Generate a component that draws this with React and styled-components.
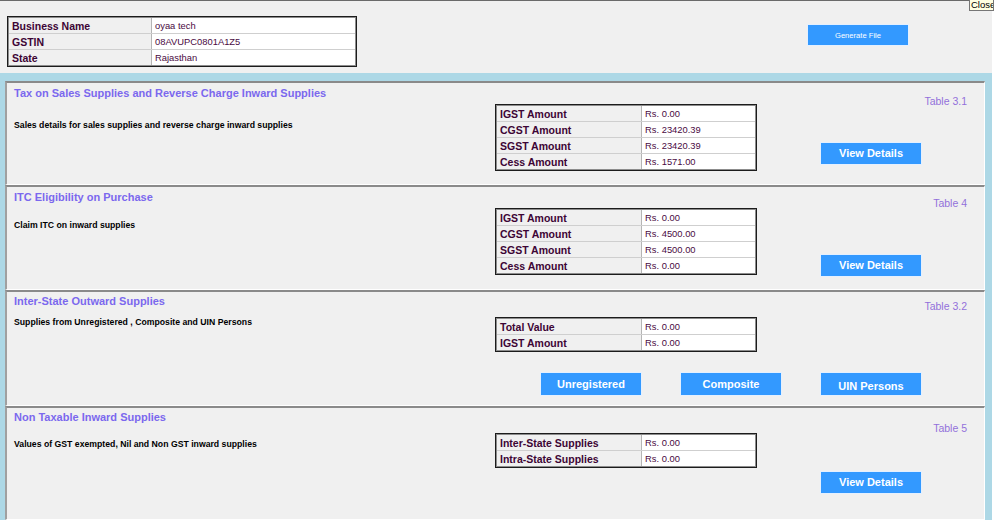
import React from 'react'
import styled, { createGlobalStyle } from 'styled-components'

const GlobalStyle = createGlobalStyle`
  html, body {
    margin: 0;
    padding: 0;
    background: #ffffff;
    font-family: "Liberation Sans", Arial, sans-serif;
  }
  * { box-sizing: border-box; }
`

const Frame = styled.div`
  position: relative;
  width: 992px;
  height: 520px;
  display: flex;
  flex-direction: column;
  background: #f0f0f0;
  border-top: 1px solid #6a6a6a;
  overflow: hidden;
`

const Header = styled.div`
  height: 72px;
  display: flex;
  align-items: flex-start;
  flex-shrink: 0;
`

const InfoBox = styled.div`
  margin: 15px 0 0 7px;
`

const Body = styled.div`
  flex: 1;
  display: flex;
  flex-direction: column;
  background: #add8e6;
  padding: 8px 7px 0 5px;
  min-height: 0;
`

const Section = styled.section`
  height: ${p => (p.$height ? p.$height + 'px' : 'auto')};
  flex: ${p => (p.$height ? '0 0 auto' : '1')};
  display: grid;
  grid-template-columns: 488px 262px 1fr;
  align-content: start;
  align-items: start;
  background: #f0f0f0;
  border-top: 2px solid #8a8a8a;
  border-left: 2px solid #a0a0a0;
  border-right: 1px solid #ffffff;
  border-bottom: 1px solid #ffffff;
`

const Info = styled.div`
  padding: ${p => p.$top}px 0 0 7px;
`

const Title = styled.div`
  font-size: 11px;
  line-height: 13px;
  font-weight: bold;
  color: #7b68ee;
`

const Desc = styled.div`
  margin-top: ${p => p.$gap}px;
  font-size: 8.7px;
  line-height: 12px;
  font-weight: bold;
  color: #000000;
`

const TableWrap = styled.div`
  margin-top: ${p => p.$top || 0}px;
  width: ${p => p.$width}px;
  border: 1px solid #1c1c1c;
  box-shadow: inset 0 0 0 1px #8c8c8c;
  padding: 1px;
  background: #ffffff;
`

const Row = styled.div`
  display: grid;
  grid-template-columns: ${p => p.$label}px 1fr;
  height: 16px;
  border-bottom: 1px solid #cfcfcf;
  &:last-child {
    border-bottom: none;
    height: 15px;
  }
`

const LabelCell = styled.div`
  background: #f0f0f0;
  border-right: 1px solid #b5b5b5;
  padding: 1px 0 0 3px;
  font-size: 10.5px;
  line-height: 14px;
  font-weight: bold;
  color: #3d0535;
`

const ValueCell = styled.div`
  padding: 1px 0 0 3px;
  font-size: 9.4px;
  line-height: 14px;
  color: #4a0a42;
`

const Side = styled.div`
  display: flex;
  flex-direction: column;
  align-items: flex-start;
  padding-right: 17px;
`

const TableNo = styled.div`
  align-self: flex-end;
  margin-top: ${p => p.$top}px;
  font-size: 10.5px;
  line-height: 13px;
  color: #9370db;
`

const Button = styled.button`
  width: 102px;
  height: ${p => p.$h || 23}px;
  margin: ${p => p.$mt || 0}px 0 0 ${p => p.$ml || 0}px;
  padding: ${p => p.$pt || 0}px 0 0 0;
  background: #3399ff;
  border: 1px solid #e4f0ff;
  color: #ffffff;
  font-family: "Liberation Sans", Arial, sans-serif;
  font-size: ${p => p.$fs || 11}px;
  font-weight: ${p => (p.$plain ? 'normal' : 'bold')};
  line-height: 13px;
  cursor: pointer;
  flex-shrink: 0;
`

const ButtonRow = styled.div`
  grid-column: 1 / -1;
  display: flex;
  justify-content: flex-end;
  gap: 38px;
  margin-top: ${p => p.$top}px;
  padding-right: 62px;
`

const Tooltip = styled.div`
  position: absolute;
  top: 0;
  left: 969px;
  width: 25px;
  height: 11px;
  background: #ffffe1;
  border: 1px solid #767676;
  border-top: none;
  font-size: 9.5px;
  line-height: 10px;
  color: #000000;
  padding-left: 1px;
  overflow: hidden;
  white-space: nowrap;
`

const Outer = styled.div`
  position: relative;
  width: 1000px;
  height: 520px;
`

const business = [
  ['Business Name', 'oyaa tech'],
  ['GSTIN', '08AVUPC0801A1Z5'],
  ['State', 'Rajasthan'],
]

const sections = [
  {
    title: 'Tax on Sales Supplies and Reverse Charge Inward Supplies',
    desc: 'Sales details for sales supplies and reverse charge inward supplies',
    tableNo: 'Table 3.1',
    height: 104,
    titleTop: 4, descGap: 19, tableTop: 21, labelTop: 12, buttonGap: 34,
    rows: [
      ['IGST Amount', 'Rs. 0.00'],
      ['CGST Amount', 'Rs. 23420.39'],
      ['SGST Amount', 'Rs. 23420.39'],
      ['Cess Amount', 'Rs. 1571.00'],
    ],
  },
  {
    title: 'ITC Eligibility on Purchase',
    desc: 'Claim ITC on inward supplies',
    tableNo: 'Table 4',
    height: 105,
    titleTop: 4, descGap: 15, tableTop: 21, labelTop: 10, buttonGap: 44,
    rows: [
      ['IGST Amount', 'Rs. 0.00'],
      ['CGST Amount', 'Rs. 4500.00'],
      ['SGST Amount', 'Rs. 4500.00'],
      ['Cess Amount', 'Rs. 0.00'],
    ],
  },
  {
    title: 'Inter-State Outward Supplies',
    desc: 'Supplies from Unregistered , Composite and UIN Persons',
    tableNo: 'Table 3.2',
    height: 116,
    titleTop: 3, descGap: 8, tableTop: 25, labelTop: 8, rowTop: 20,
    buttons: ['Unregistered', 'Composite', 'UIN Persons'],
    rows: [
      ['Total Value', 'Rs. 0.00'],
      ['IGST Amount', 'Rs. 0.00'],
    ],
  },
  {
    title: 'Non Taxable Inward Supplies',
    desc: 'Values of GST exempted, Nil and Non GST inward supplies',
    tableNo: 'Table 5',
    titleTop: 3, descGap: 14, tableTop: 25, labelTop: 14, buttonGap: 36,
    rows: [
      ['Inter-State Supplies', 'Rs. 0.00'],
      ['Intra-State Supplies', 'Rs. 0.00'],
    ],
  },
]

const DataTable = ({ rows, width, label, top }) => (
  <TableWrap $width={width} $top={top}>
    {rows.map(([k, v]) => (
      <Row key={k} $label={label}>
        <LabelCell>{k}</LabelCell>
        <ValueCell>{v}</ValueCell>
      </Row>
    ))}
  </TableWrap>
)

const SummarySection = ({ s }) => (
  <Section $height={s.height}>
    <Info $top={s.titleTop}>
      <Title>{s.title}</Title>
      <Desc $gap={s.descGap}>{s.desc}</Desc>
    </Info>
    <DataTable rows={s.rows} width={262} label={145} top={s.tableTop} />
    <Side>
      <TableNo $top={s.labelTop}>{s.tableNo}</TableNo>
      {!s.buttons && <Button $ml={63} $mt={s.buttonGap}>View Details</Button>}
    </Side>
    {s.buttons && (
      <ButtonRow $top={s.rowTop}>
        {s.buttons.map((b, i) => (
          <Button key={b} $pt={i === 2 ? 4 : 0} $h={24}>{b}</Button>
        ))}
      </ButtonRow>
    )}
  </Section>
)

export default function App() {
  return (
    <Outer>
      <GlobalStyle />
      <Frame>
        <Header>
          <InfoBox>
            <DataTable rows={business} width={350} label={143} />
          </InfoBox>
          <Button $plain $fs={7.6} $h={22} $mt={23} $ml={450}>Generate File</Button>
        </Header>
        <Body>
          {sections.map(s => (
            <SummarySection key={s.tableNo} s={s} />
          ))}
        </Body>
      </Frame>
      <Tooltip>Close</Tooltip>
    </Outer>
  )
}
